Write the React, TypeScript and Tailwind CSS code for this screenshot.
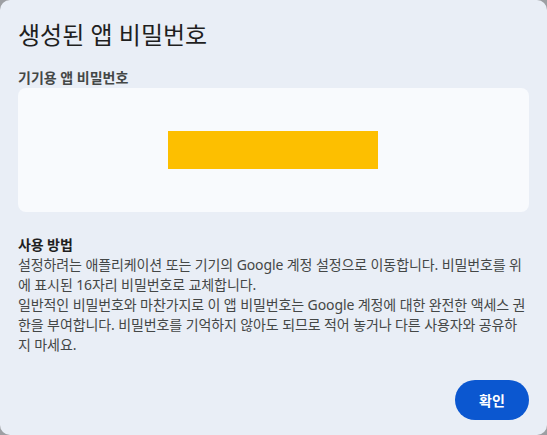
import React from 'react';

const App: React.FC = () => {
  return (
    <div
      className="w-[547px] h-[435px] bg-[#9d9fa3] overflow-hidden"
      style={{ fontFamily: '"Noto Sans", "Noto Sans CJK KR", sans-serif' }}
    >
      <div className="h-full bg-[#e9eef6] rounded-[10px] flex flex-col px-[18px]">
        {/* Title */}
        <h1 className="mt-[17px] text-[24px] leading-[36px] text-[#1f1f1f] font-normal">생성된 앱 비밀번호</h1>

        {/* Password box */}
        <div className="mt-[15px] text-[14px] leading-[20px] font-bold text-[#444746]">기기용 앱 비밀번호</div>
        <div className="h-[124px] bg-[#f8fafd] rounded-[8px] flex items-center justify-center">
          <div className="w-[210px] h-[38px] bg-[#fdbf00] ml-[-1px]" />
        </div>

        {/* How to use */}
        <div className="mt-[23px] text-[14px] leading-[20px] text-[#444746] tracking-[-0.1px]">
          <div className="font-bold text-[#1f1f1f]">사용 방법</div>
          <p className="[word-break:break-all]">
            설정하려는 애플리케이션 또는 기기의 Google 계정 설정으로 이동합니다. 비밀번호를 위에 표시된 16자리 비밀번호로 교체합니다.
          </p>
          <p className="[word-break:break-all]">
            일반적인 비밀번호와 마찬가지로 이 앱 비밀번호는 Google 계정에 대한 완전한 액세스 권한을 부여합니다. 비밀번호를 기억하지 않아도 되므로 적어 놓거나 다른 사용자와 공유하지 마세요.
          </p>
        </div>

        {/* Actions */}
        <div className="mt-auto mb-[15px] flex justify-end">
          <button className="h-[40px] w-[74px] rounded-full bg-[#0b57d0] text-white text-[14px] font-bold">
            확인
          </button>
        </div>
      </div>
    </div>
  );
};

export default App;
